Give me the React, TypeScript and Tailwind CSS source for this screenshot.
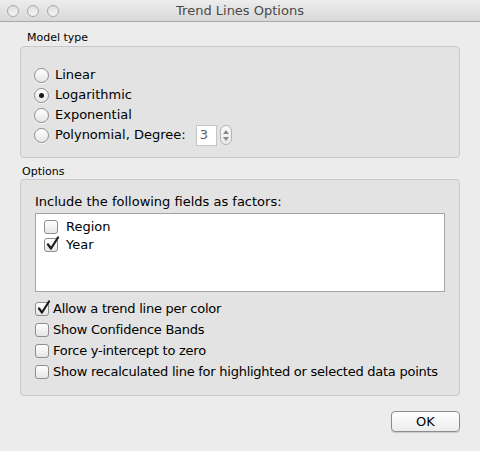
const font = { fontFamily: '"DejaVu Sans", "Liberation Sans", sans-serif' };

function Radio({ checked }: { checked?: boolean }) {
  return (
    <span className="flex h-[15px] w-[15px] shrink-0 items-center justify-center rounded-full border border-[#8e8e8e] bg-gradient-to-b from-[#ffffff] to-[#e6e6e6] shadow-[0_1px_0_rgba(255,255,255,0.6)]">
      {checked && <span className="h-[5px] w-[5px] rounded-full bg-[#1a1a1a]" />}
    </span>
  );
}

function Check({ checked }: { checked?: boolean }) {
  return (
    <span className="relative flex h-[14px] w-[14px] shrink-0 rounded-[3px] border border-[#8e8e8e] bg-gradient-to-b from-[#ffffff] to-[#e6e6e6]">
      {checked && (
        <svg className="absolute -top-[3px] left-[1px]" width="14" height="15" viewBox="0 0 14 15">
          <path d="M2 8.5 L5 12.5 L12 1.5" fill="none" stroke="#1c1c1c" strokeWidth="2.2" strokeLinecap="round" strokeLinejoin="round" />
        </svg>
      )}
    </span>
  );
}

const models = [
  { label: "Linear", checked: false },
  { label: "Logarithmic", checked: true },
  { label: "Exponential", checked: false },
];

const options = [
  { label: "Allow a trend line per color", checked: true },
  { label: "Show Confidence Bands", checked: false },
  { label: "Force y-intercept to zero", checked: false },
  { label: "Show recalculated line for highlighted or selected data points", checked: false },
];

export default function App() {
  return (
    <div className="flex h-[451px] w-[480px] flex-col bg-[#ececec] text-[13px] text-black" style={font}>
      {/* TITLE BAR */}
      <div className="relative flex h-[22px] shrink-0 items-center justify-center border-b border-[#a9a9a9] bg-gradient-to-b from-[#ededed] to-[#d8d8d8]">
        <div className="absolute left-[7px] top-[5px] flex gap-[8px]">
          {[0, 1, 2].map((i) => (
            <span key={i} className="h-[12px] w-[12px] rounded-full border border-[#a8a8a8] bg-gradient-to-b from-[#e0e0e0] to-[#f4f4f4]" />
          ))}
        </div>
        <span className="text-[13px] text-[#4a4a4a]">Trend Lines Options</span>
      </div>

      <div className="flex flex-col px-[20px]">
        {/* MODEL TYPE */}
        <div className="mt-[9px] pl-[7px] text-[11px] leading-[14px]">Model type</div>
        <div className="mt-[1px] flex h-[112px] flex-col gap-[4px] rounded-[4px] border border-[#c9c9c9] bg-[#e3e3e3] pl-[13px] pt-[20px]">
          {models.map((m) => (
            <div key={m.label} className="flex h-[16px] items-center gap-[6px]">
              <Radio checked={m.checked} />
              <span>{m.label}</span>
            </div>
          ))}
          <div className="flex h-[16px] items-center gap-[6px]">
            <Radio />
            <span>Polynomial, Degree:</span>
            <div className="ml-[4px] flex items-center gap-[3px]">
              <div className="flex h-[21px] w-[21px] items-center border border-[#c4c4c4] bg-white pl-[3px] text-[#5a5a5a]">3</div>
              <div className="flex h-[20px] w-[12px] flex-col items-center justify-center gap-[3px] rounded-full border border-[#b4b4b4] bg-gradient-to-b from-[#fafafa] to-[#e8e8e8]">
                <svg width="6" height="4" viewBox="0 0 6 4"><path d="M0 4 L3 0 L6 4 Z" fill="#8a8a8a" /></svg>
                <svg width="6" height="4" viewBox="0 0 6 4"><path d="M0 0 L3 4 L6 0 Z" fill="#8a8a8a" /></svg>
              </div>
            </div>
          </div>
        </div>

        {/* OPTIONS */}
        <div className="mt-[7px] pl-[2px] text-[11px] leading-[14px]">Options</div>
        <div className="mt-[0px] flex h-[217px] flex-col rounded-[4px] border border-[#c9c9c9] bg-[#e3e3e3] px-[14px] pt-[14px]">
          <div className="leading-[16px]">Include the following fields as factors:</div>
          <div className="mt-[3px] flex h-[79px] flex-col border border-[#a4a4a4] bg-white pl-[8px] pt-[4px]">
            <div className="flex h-[18px] items-center gap-[8px]">
              <Check />
              <span>Region</span>
            </div>
            <div className="flex h-[18px] items-center gap-[8px]">
              <Check checked />
              <span>Year</span>
            </div>
          </div>
          <div className="mt-[9px] flex flex-col gap-[5px]">
            {options.map((o) => (
              <div key={o.label} className="flex h-[16px] items-center gap-[4px]">
                <Check checked={o.checked} />
                <span className="whitespace-nowrap tracking-[-0.25px]">{o.label}</span>
              </div>
            ))}
          </div>
        </div>

        {/* BUTTON */}
        <div className="mt-[15px] flex justify-end">
          <button className="flex h-[21px] w-[69px] items-center justify-center rounded-[4px] border border-[#8c8c8c] bg-gradient-to-b from-[#ffffff] to-[#ececec] text-[13px] shadow-[0_1px_1px_rgba(0,0,0,0.15)]">
            OK
          </button>
        </div>
      </div>
    </div>
  );
}
